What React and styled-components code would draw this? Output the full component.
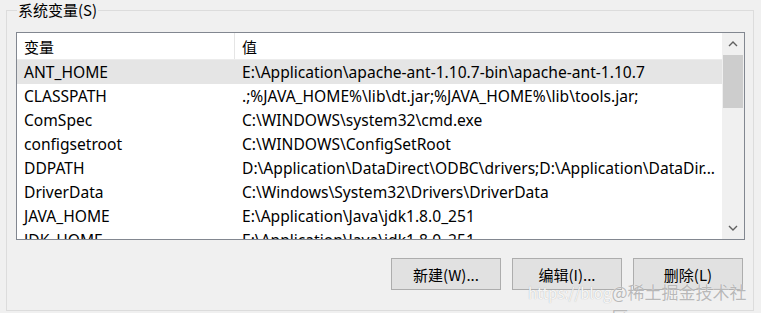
import styled, { createGlobalStyle } from 'styled-components';

const GlobalStyle = createGlobalStyle`
  html, body {
    margin: 0;
    padding: 0;
    background: #f0f0f0;
  }
  body {
    font-family: 'Noto Sans', 'Noto Sans CJK SC', sans-serif;
    color: #000;
  }
`

const Page = styled.div`
  position: relative;
  width: 761px;
  height: 313px;
  overflow: hidden;
  background: #f0f0f0;
`

const GroupBox = styled.fieldset`
  margin: 0 0 0 6px;
  width: 748px;
  height: 311px;
  box-sizing: border-box;
  padding: 2px 0 0 9px;
  border: 1px solid #dcdcdc;
  min-inline-size: 0;
`

const Legend = styled.legend`
  margin-left: 1px;
  padding: 0 1px;
  font-size: 15px;
  line-height: 20px;
  font-family: 'Noto Sans CJK SC', 'Noto Sans', sans-serif;
`

const ListBox = styled.div`
  width: 729px;
  height: 208px;
  box-sizing: border-box;
  border: 1px solid #828790;
  background: #fff;
  display: flex;
  margin-top: 10px;
`

const ListBody = styled.div`
  flex: 1;
  overflow: hidden;
  display: flex;
  flex-direction: column;
`

const Row = styled.div`
  display: grid;
  grid-template-columns: 218px 1fr;
  height: ${p => (p.$header ? 27 : 24)}px;
  flex-shrink: 0;
  align-items: center;
  background: ${p => (p.$selected ? '#e5e5e5' : '#fff')};
  border-bottom: ${p => (p.$header ? '1px solid #ececec' : 'none')};
  font-size: 15.6px;
  box-sizing: border-box;
`

const Cell = styled.div`
  height: 100%;
  display: flex;
  align-items: center;
  padding-left: 7px;
  white-space: nowrap;
  overflow: hidden;
  border-right: ${p => (p.$divider ? '1px solid #e5e5e5' : 'none')};
  font-family: ${p => (p.$cjk ? "'Noto Sans CJK SC', sans-serif" : "'Noto Sans', sans-serif")};
  font-size: ${p => (p.$cjk ? '15px' : 'inherit')};
`

const ScrollBar = styled.div`
  width: 22px;
  background: #f0f0f0;
  display: flex;
  flex-direction: column;
`

const Arrow = styled.div`
  height: 22px;
  display: flex;
  align-items: center;
  justify-content: center;
`

const Track = styled.div`
  flex: 1;
  padding: 0 1px;
`

const Thumb = styled.div`
  height: 53px;
  background: #cdcdcd;
`

const Buttons = styled.div`
  display: flex;
  justify-content: flex-end;
  gap: 11px;
  width: 727px;
  margin-top: 18px;
`

const Button = styled.div`
  width: 110px;
  height: 32px;
  box-sizing: border-box;
  border: 1px solid #adadad;
  background: #e1e1e1;
  display: flex;
  align-items: center;
  justify-content: center;
  font-size: 15px;
  font-family: 'Noto Sans CJK SC', 'Noto Sans', sans-serif;
`

const Watermark = styled.div`
  position: absolute;
  left: 528px;
  top: 279px;
  display: flex;
  align-items: baseline;
  font-family: 'Noto Sans CJK SC', sans-serif;
  pointer-events: none;
`

const WmUrl = styled.span`
  font-size: 15px;
  color: rgba(255, 255, 255, 0.9);
  text-shadow: 0 0 1px #a8a8a8;
`

const WmName = styled.span`
  font-size: 17px;
  color: #b8b8b8;
  text-shadow: 0 0 1px #ffffff;
`

const rows = [
  ['ANT_HOME', 'E:\\Application\\apache-ant-1.10.7-bin\\apache-ant-1.10.7'],
  ['CLASSPATH', '.;%JAVA_HOME%\\lib\\dt.jar;%JAVA_HOME%\\lib\\tools.jar;'],
  ['ComSpec', 'C:\\WINDOWS\\system32\\cmd.exe'],
  ['configsetroot', 'C:\\WINDOWS\\ConfigSetRoot'],
  ['DDPATH', 'D:\\Application\\DataDirect\\ODBC\\drivers;D:\\Application\\DataDir...'],
  ['DriverData', 'C:\\Windows\\System32\\Drivers\\DriverData'],
  ['JAVA_HOME', 'E:\\Application\\Java\\jdk1.8.0_251'],
  ['JDK_HOME', 'E:\\Application\\Java\\jdk1.8.0_251'],
]

const Chevron = ({ down }) => (
  <svg width="10" height="6" viewBox="0 0 10 6">
    <path
      d={down ? 'M1 1 L5 5 L9 1' : 'M1 5 L5 1 L9 5'}
      fill="none"
      stroke="#606060"
      strokeWidth="1.4"
    />
  </svg>
)

function App() {
  return (
    <Page>
      <GlobalStyle />
      <GroupBox>
        <Legend>系统变量(S)</Legend>
        <ListBox>
          <ListBody>
            <Row $header>
              <Cell $divider $cjk>变量</Cell>
              <Cell $cjk>值</Cell>
            </Row>
            {rows.map(([name, value], i) => (
              <Row key={name} $selected={i === 0}>
                <Cell>{name}</Cell>
                <Cell>{value}</Cell>
              </Row>
            ))}
          </ListBody>
          <ScrollBar>
            <Arrow><Chevron /></Arrow>
            <Track><Thumb /></Track>
            <Arrow><Chevron down /></Arrow>
          </ScrollBar>
        </ListBox>
        <Buttons>
          <Button>新建(W)...</Button>
          <Button>编辑(I)...</Button>
          <Button>删除(L)</Button>
        </Buttons>
      </GroupBox>
      <Watermark>
        <WmUrl>https://blog</WmUrl>
        <WmName>@稀土掘金技术社区</WmName>
      </Watermark>
    </Page>
  )
}

export default App
